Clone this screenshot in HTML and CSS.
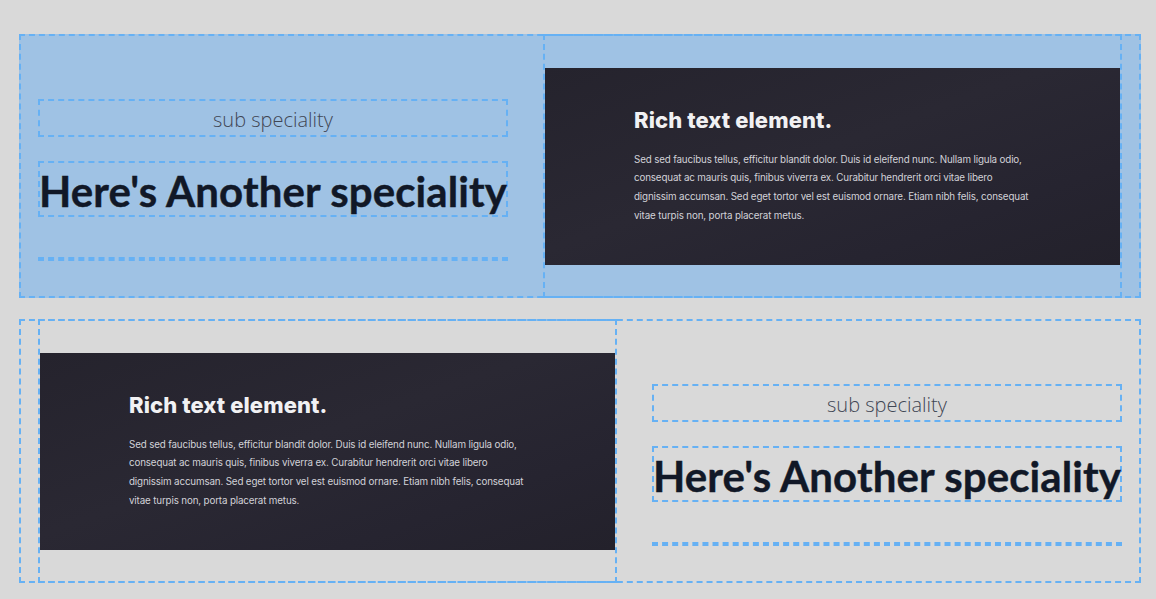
FILE: index.html
```html
<!DOCTYPE html>
<html>
<head>
<meta charset="utf-8">
<link rel="stylesheet" href="styles.css">
</head>
<body>
<div class="page">
  <section class="row row-blue">
    <div class="text-col">
      <div class="sub">sub speciality</div>
      <h2 class="title">Here's Another speciality</h2>
      <hr class="rule">
    </div>
    <div class="media-col">
      <div class="shot">
        <h3 class="shot-title">Rich text element.</h3>
        <p class="shot-body">Sed sed faucibus tellus, efficitur blandit dolor. Duis id eleifend nunc. Nullam ligula odio,<br>consequat ac mauris quis, finibus viverra ex. Curabitur hendrerit orci vitae libero<br>dignissim accumsan. Sed eget tortor vel est euismod ornare. Etiam nibh felis, consequat<br>vitae turpis non, porta placerat metus.</p>
      </div>
    </div>
  </section>
  <section class="row row-gray">
    <div class="media-col">
      <div class="shot">
        <h3 class="shot-title">Rich text element.</h3>
        <p class="shot-body">Sed sed faucibus tellus, efficitur blandit dolor. Duis id eleifend nunc. Nullam ligula odio,<br>consequat ac mauris quis, finibus viverra ex. Curabitur hendrerit orci vitae libero<br>dignissim accumsan. Sed eget tortor vel est euismod ornare. Etiam nibh felis, consequat<br>vitae turpis non, porta placerat metus.</p>
      </div>
    </div>
    <div class="text-col">
      <div class="sub">sub speciality</div>
      <h2 class="title">Here's Another speciality</h2>
      <hr class="rule">
    </div>
  </section>
</div>
</body>
</html>
```
FILE: styles.css
```css
html, body {
  margin: 0;
  padding: 0;
  background: #d9d9d9;
}
.page {
  padding: 34px 15px 0 19px;
  display: flex;
  flex-direction: column;
  gap: 21px;
}
.row {
  display: flex;
  gap: 35px;
  padding: 0 17px;
  border: 2px dashed #66b1f4;
  height: 260px;
}
.row-blue {
  background: #9fc2e4;
}
.row-gray {
  background: #d9d9d9;
}
.text-col {
  width: 470px;
  flex: none;
  padding-top: 63px;
  box-sizing: border-box;
}
.media-col {
  width: 579px;
  flex: none;
  box-sizing: border-box;
  border: 2px dashed #66b1f4;
  margin: -2px 0;
  display: flex;
  align-items: center;
}
.sub {
  height: 38px;
  box-sizing: border-box;
  border: 2px dashed #66b1f4;
  display: flex;
  align-items: center;
  justify-content: center;
  padding-top: 3px;
  font-family: "Open Sans", sans-serif;
  font-weight: 300;
  font-size: 20px;
  color: #3f4654;
}
.title {
  margin: 24px 0 0;
  height: 56px;
  box-sizing: border-box;
  border: 2px dashed #66b1f4;
  display: flex;
  align-items: center;
  justify-content: center;
  padding-top: 4px;
  font-family: Lato, sans-serif;
  font-weight: 700;
  font-size: 42px;
  color: #111827;
  white-space: nowrap;
  letter-spacing: 0.1px;
  -webkit-text-stroke: 0.4px #111827;
}
.rule {
  margin: 40px 0 0;
  height: 0;
  border: 2px dashed #66b1f4;
  border-left: 0;
  border-right: 0;
}
.shot {
  width: 100%;
  height: 197px;
  box-sizing: border-box;
  padding: 38px 0 0 89px;
  background: linear-gradient(160deg, #25232d 0%, #2a2833 45%, #262430 75%, #23212b 100%);
}
.shot-title {
  margin: 0;
  font-family: Inter, sans-serif;
  font-weight: 800;
  font-size: 22px;
  letter-spacing: 0.1px;
  color: #f1f1f3;
  line-height: 28px;
}
.shot-body {
  margin: 17px 0 0;
  font-family: Inter, sans-serif;
  font-size: 9.8px;
  line-height: 18.7px;
  color: #d2d2d8;
  letter-spacing: -0.15px;
}
```
